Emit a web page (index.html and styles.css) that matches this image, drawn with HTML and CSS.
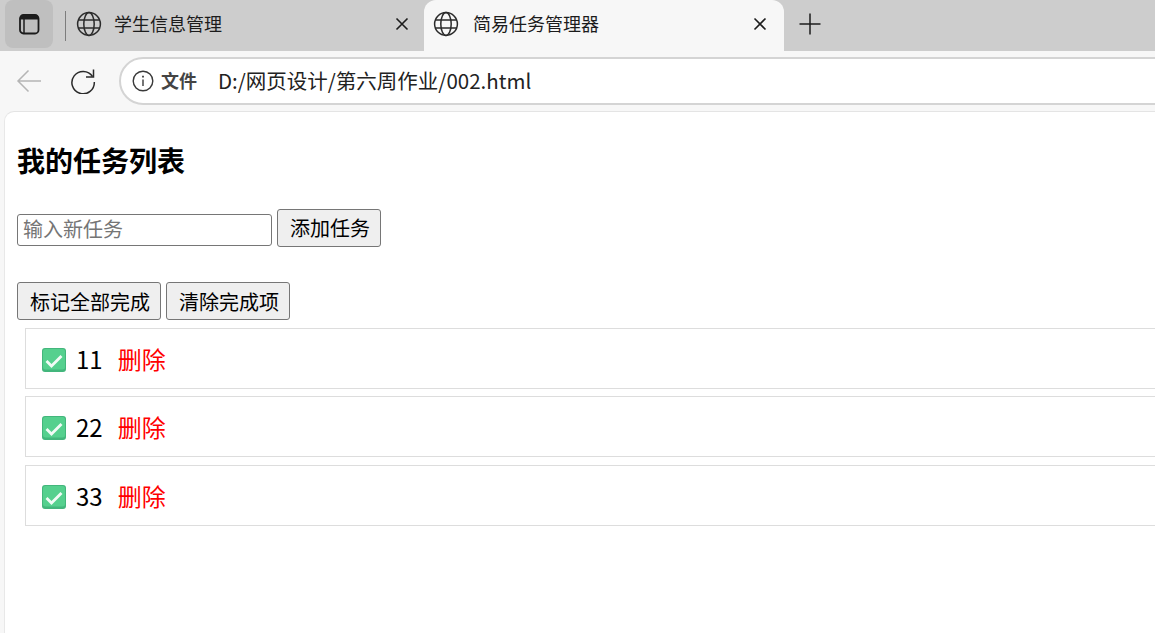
FILE: index.html
```html
<!DOCTYPE html>
<html lang="zh">
<head>
  <meta charset="UTF-8">
  <title>简易任务管理器</title>
  <link rel="stylesheet" href="styles.css">
</head>
<body>
  <div class="tabstrip">
    <div class="tab-switch">
      <svg width="24" height="24" viewBox="0 0 24 24" fill="none" stroke="#1c1c1c" stroke-width="1.800">
        <rect x="3" y="3" width="18.500" height="18.500" rx="3.500"/>
        <path d="M3 5.500a2.500 2.500 0 0 1 2.500-2.500h13.500a2.500 2.500 0 0 1 2.500 2.500v2h-18.500z" fill="#1c1c1c" stroke="none"/>
        <path d="M7 7v14" stroke-width="1.500"/>
      </svg>
    </div>
    <div class="tab-sep"></div>
    <div class="tab">
      <svg class="globe" width="26" height="26" viewBox="0 0 26 26" fill="none" stroke="#2b2b2b" stroke-width="1.500">
        <circle cx="13" cy="13" r="11.400"/>
        <ellipse cx="13" cy="13" rx="5.200" ry="11.400"/>
        <path d="M2.500 9h21M2.500 17h21"/>
      </svg>
      <span class="tab-title">学生信息管理</span>
      <svg class="tab-close" width="14" height="14" viewBox="0 0 14 14" stroke="#1c1c1c" stroke-width="1.600"><path d="M1.500 1.500l11 11M12.500 1.500l-11 11"/></svg>
    </div>
    <div class="tab active">
      <svg class="globe" width="26" height="26" viewBox="0 0 26 26" fill="none" stroke="#2b2b2b" stroke-width="1.500">
        <circle cx="13" cy="13" r="11.400"/>
        <ellipse cx="13" cy="13" rx="5.200" ry="11.400"/>
        <path d="M2.500 9h21M2.500 17h21"/>
      </svg>
      <span class="tab-title">简易任务管理器</span>
      <svg class="tab-close" width="14" height="14" viewBox="0 0 14 14" stroke="#1c1c1c" stroke-width="1.600"><path d="M1.500 1.500l11 11M12.500 1.500l-11 11"/></svg>
    </div>
    <svg class="new-tab" width="22" height="22" viewBox="0 0 22 22" stroke="#1c1c1c" stroke-width="1.500"><path d="M11 0.500v21M0.500 11h21"/></svg>
  </div>

  <div class="toolbar">
    <svg class="nav-back" width="26" height="24" viewBox="0 0 26 24" fill="none" stroke="#b5b5b5" stroke-width="1.500"><path d="M25 12H2M12.500 1.500L2 12l10.500 10.500"/></svg>
    <svg class="nav-reload" width="26" height="26" viewBox="0 0 26 26" fill="none" stroke="#2b2b2b" stroke-width="1.500"><path d="M22.500 8.500A11.200 11.200 0 1 0 24.300 14"/><path d="M23.500 1.500v7.500h-7.500"/></svg>
    <div class="address">
      <svg width="22" height="22" viewBox="0 0 22 22" fill="none" stroke="#3a3a3a" stroke-width="1.400"><circle cx="11" cy="11" r="9.800"/><path d="M11 9.500v6.500"/><path d="M11 5.800v1.600" stroke-width="1.800"/></svg>
      <span class="addr-scheme">文件</span>
      <span class="addr-url">D:/网页设计/第六周作业/002.html</span>
    </div>
  </div>

  <div class="page">
    <h2 class="heading">我的任务列表</h2>
    <div class="add-row">
      <input class="task-input" type="text" placeholder="输入新任务">
      <button class="btn">添加任务</button>
    </div>
    <div class="action-row">
      <button class="btn">标记全部完成</button>
      <button class="btn">清除完成项</button>
    </div>
    <ul class="task-list">
      <li class="task-item">
        <svg class="check" width="24" height="24" viewBox="0 0 24 24"><rect x="0" y="0" width="24" height="24" rx="3" fill="#43b67c"/><rect x="1" y="1" width="22" height="20.500" rx="2.500" fill="#55d08e"/><path d="M4.500 13l5 5 10-10" fill="none" stroke="#f2fbf6" stroke-width="2.800"/></svg>
        <span class="task-text">11</span>
        <a class="task-del">删除</a>
      </li>
      <li class="task-item">
        <svg class="check" width="24" height="24" viewBox="0 0 24 24"><rect x="0" y="0" width="24" height="24" rx="3" fill="#43b67c"/><rect x="1" y="1" width="22" height="20.500" rx="2.500" fill="#55d08e"/><path d="M4.500 13l5 5 10-10" fill="none" stroke="#f2fbf6" stroke-width="2.800"/></svg>
        <span class="task-text">22</span>
        <a class="task-del">删除</a>
      </li>
      <li class="task-item">
        <svg class="check" width="24" height="24" viewBox="0 0 24 24"><rect x="0" y="0" width="24" height="24" rx="3" fill="#43b67c"/><rect x="1" y="1" width="22" height="20.500" rx="2.500" fill="#55d08e"/><path d="M4.500 13l5 5 10-10" fill="none" stroke="#f2fbf6" stroke-width="2.800"/></svg>
        <span class="task-text">33</span>
        <a class="task-del">删除</a>
      </li>
    </ul>
  </div>
</body>
</html>
```

FILE: styles.css
```css
html, body {
  margin: 0;
  height: 633px;
  overflow: hidden;
}

body {
  font-family: "Noto Sans CJK SC", "Noto Sans", sans-serif;
  background: #f7f7f7;
  color: #000;
}

/* tab strip */
.tabstrip {
  height: 51px;
  background: #cdcdcd;
  display: flex;
  align-items: flex-start;
}

.tab-switch {
  width: 48px;
  height: 48px;
  margin-left: 5px;
  background: #bfbfbf;
  border-radius: 8px;
  display: flex;
  align-items: center;
  justify-content: center;
}

.tab-sep {
  width: 1px;
  height: 30px;
  margin: 11px 0 0 12px;
  background: #7d7d7d;
}

.tab {
  height: 48px;
  display: flex;
  align-items: center;
  font-size: 18px;
  line-height: 24px;
  color: #1c1c1c;
}

.tab:not(.active) {
  width: 358px;
  padding-left: 10px;
  padding-right: 15px;
  box-sizing: border-box;
}

.tab.active {
  width: 360px;
  height: 51px;
  padding: 0 17px 3px 9px;
  box-sizing: border-box;
  background: #f7f7f7;
  border-radius: 12px 12px 0 0;
}

.tab-title {
  flex: 1;
  margin-left: 12px;
  margin-top: -3px;
}

.tab.active .tab-title {
  margin-left: 14px;
}

.globe {
  flex: none;
}

.new-tab {
  margin: 13px 0 0 15px;
}

/* toolbar */
.toolbar {
  height: 60px;
  box-sizing: border-box;
  padding: 6px 0 6px 16px;
  display: flex;
  align-items: center;
}

.nav-back {
  flex: none;
}

.nav-reload {
  flex: none;
  margin-left: 28px;
}

.address {
  flex: 1;
  height: 48px;
  box-sizing: border-box;
  margin-left: 23px;
  margin-right: -40px;
  padding-left: 11px;
  background: #fff;
  border: 2px solid #d4d4d4;
  border-radius: 24px;
  display: flex;
  align-items: center;
  font-size: 20.500px;
  line-height: 28px;
}

.addr-scheme {
  margin-left: 7px;
  margin-top: -2px;
  font-size: 18px;
  font-weight: 700;
  color: #444;
}

.addr-url {
  margin-left: 21px;
  margin-top: -2px;
  color: #222;
}

/* page */
.page {
  height: 522px;
  margin-left: 4px;
  padding: 0 0 0 12px;
  background: #fff;
  border-top: 1px solid #e4e4e4;
  border-left: 1px solid #e8e8e8;
  border-top-left-radius: 10px;
}

.heading {
  margin: 25px 0 0;
  font-size: 28px;
  line-height: 46px;
  font-weight: 700;
}

.add-row {
  display: flex;
  align-items: center;
  gap: 5px;
  margin-top: 26px;
}

.task-input {
  width: 255px;
  height: 32px;
  margin-top: 4px;
  box-sizing: border-box;
  padding: 0 5px 3px;
  border: 1px solid #767676;
  border-radius: 3px;
  font: 20px "Noto Sans CJK SC", sans-serif;
}

.task-input::placeholder {
  color: #757575;
}

.btn {
  height: 38px;
  padding: 0 10px 2px 12px;
  background: #efefef;
  border: 1px solid #767676;
  border-radius: 3px;
  font: 20px "Noto Sans CJK SC", sans-serif;
  color: #000;
}

.action-row {
  display: flex;
  gap: 5px;
  margin-top: 35px;
}

.action-row .btn {
  padding-bottom: 0;
}

.task-list {
  list-style: none;
  margin: 8px 0 0 8px;
  padding: 0;
}

.task-item {
  height: 61px;
  box-sizing: border-box;
  margin-bottom: 7.400px;
  padding-left: 16px;
  border: 1px solid #ddd;
  border-right: none;
  display: flex;
  align-items: center;
  font-size: 24px;
}

.check {
  margin-top: 3px;
}

.task-text {
  margin-left: 10px;
}

.task-del {
  margin-left: 15px;
  color: #f00;
}
```
